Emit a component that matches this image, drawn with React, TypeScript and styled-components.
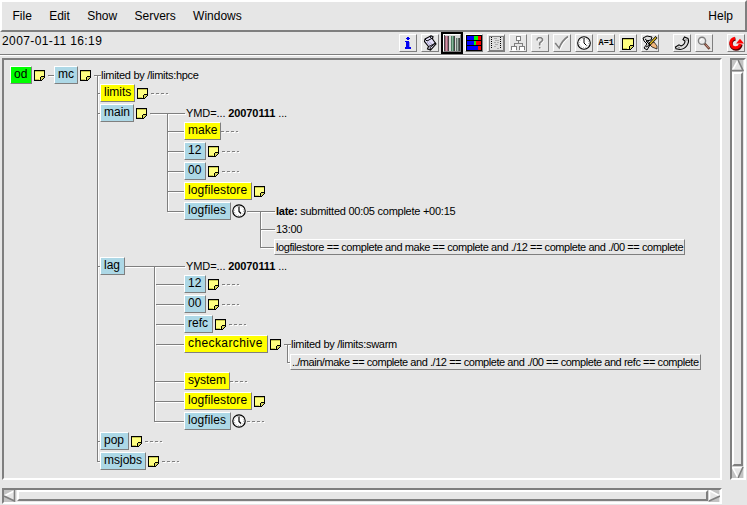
import React from "react";
import styled, { createGlobalStyle } from "styled-components";

const GREY = "#e6e6e6";
const DARK = "#7f7f7f";

const Global = createGlobalStyle`
  * { box-sizing: border-box; }
  body { margin: 0; background: ${GREY}; overflow: hidden; }
`;

const Window = styled.div`
  width: 747px;
  height: 505px;
  display: flex;
  flex-direction: column;
  background: ${GREY};
  color: #000;
  font: 12px "Liberation Sans", Arial, sans-serif;
  white-space: pre;
`;

const MenuBar = styled.nav`
  flex: none;
  height: 32px;
  display: flex;
  align-items: center;
  gap: 17.3px;
  padding: 0 12px 0 10.5px;
  border: 2px solid;
  border-color: #fff ${DARK} ${DARK} #fff;
`;

const MenuItem = styled.span<{ $end?: boolean }>`
  margin-left: ${(p) => (p.$end ? "auto" : "0")};
`;

const StatusBar = styled.div`
  flex: none;
  height: 24px;
  display: flex;
  align-items: flex-start;
  padding-left: 2px;
  border-bottom: 1px solid #fff;
  box-shadow: inset 0 -1px 0 ${DARK};
`;

const DateTime = styled.span`
  flex: 1;
  line-height: 18px;
  letter-spacing: 0.4px;
`;

const Tools = styled.div`
  display: flex;
  gap: 4px;
  padding: 2px 2px 0 0;
`;

const ToolButton = styled.button<{ $active?: boolean; $gap?: number }>`
  width: 18px;
  height: 18px;
  padding: 0;
  margin-left: ${(p) => p.$gap ?? 0}px;
  border: 1px solid;
  border-color: #fff ${DARK} ${DARK} #fff;
  background: ${GREY};
  color: #000;
  outline: ${(p) => (p.$active ? "2px solid #000" : "none")};
  svg { display: block; }
`;

const VariableGlyph = styled.span`
  display: block;
  margin-left: 0.5px;
  font: bold 8.5px/16px "Liberation Mono", monospace;
`;

const Workspace = styled.div`
  display: grid;
  grid-template-columns: 720px 16px;
  grid-template-rows: 422px 16px;
  gap: 8px;
  padding: 2px 0 0 2px;
`;

const Canvas = styled.main`
  position: relative;
  padding: 6px 0 0 6px;
  border: 2px solid;
  border-color: ${DARK} #fff #fff ${DARK};
`;

const Connectors = styled.svg`
  position: absolute;
  left: -4px;
  top: -60px;
`;

const Row = styled.div<{ $h: number; $indent: number }>`
  position: relative;
  display: flex;
  align-items: flex-start;
  height: ${(p) => p.$h}px;
  padding-left: ${(p) => p.$indent}px;
`;

const Box = styled.span<{ $w: number; $fill: string; $track?: number }>`
  width: ${(p) => p.$w}px;
  height: 18px;
  padding-left: 3px;
  border: 1px solid;
  border-color: #fff ${DARK} ${DARK} #fff;
  background: ${(p) => p.$fill};
  line-height: 14px;
  letter-spacing: ${(p) => p.$track ?? 0}px;
`;

const Small = styled.span<{ $gap?: number; $track?: number }>`
  margin-left: ${(p) => p.$gap ?? 0}px;
  font-size: 11px;
  line-height: 18px;
  letter-spacing: ${(p) => p.$track ?? -0.3}px;
`;

const Trigger = styled(Small)`
  width: 411px;
  height: 16px;
  padding-left: 1px;
  border: 1px solid;
  border-color: #fff ${DARK} ${DARK} #fff;
  line-height: 15px;
`;

const Mark = styled.span<{ $x: number; $y: number }>`
  margin: ${(p) => p.$y}px 0 0 ${(p) => p.$x}px;
  svg { display: block; }
`;

const Trough = styled.div<{ $vertical?: boolean }>`
  display: flex;
  flex-direction: ${(p) => (p.$vertical ? "column" : "row")};
  border: 2px solid;
  border-color: ${DARK} #fff #fff ${DARK};
  svg { display: block; flex: none; }
`;

const Thumb = styled.div<{ $vertical?: boolean }>`
  flex: 1;
  margin: ${(p) => (p.$vertical ? "0 1px 0 0" : "0 0 1px 1px")};
  border: 2px solid;
  border-color: #fff ${DARK} ${DARK} #fff;
`;

const arrowShapes = {
  up: ["M6 0L11 11H0Z", "M6 0L0 11", "M0 10.5H11L6 0"],
  down: ["M0 1H11L6 12Z", "M11 1.5H0.5L6 12", "M11 1L6 12"],
  left: ["M0 6L11 0V11Z", "M0 6L11 0.5", "M10.5 0V11L0 6"],
  right: ["M1 0L12 6L1 11Z", "M12 6L1.5 0.5V11", "M1 11L12 6"],
};

const Arrow = ({ dir }: { dir: keyof typeof arrowShapes }) => {
  const [body, light, shade] = arrowShapes[dir];
  return (
    <svg width="12" height="12">
      <rect width="11" height="12" fill="#c3c3c3" />
      <path d={body} fill={GREY} />
      <path d={light} fill="none" stroke="#fff" strokeWidth="1.6" />
      <path d={shade} fill="none" stroke={DARK} strokeWidth="1.6" />
    </svg>
  );
};

const Note = ({ size = 11 }: { size?: number }) => (
  <svg width={size} height={size} viewBox="0 0 11 11" shapeRendering="crispEdges">
    <path d="M0 0H11V8H10V9H9V10H8V11H0Z" fill="#000" />
    <path d="M1 1H10V6H7V7H6V10H1Z" fill="#ffff80" />
    <path d="M1 1H10V2H1ZM1 9H5V10H1Z" fill="#c8c850" />
    <path d="M7 7H10V8H9V9H8V10H7Z" fill="#d8d860" />
  </svg>
);

const ClockFace = () => (
  <svg width="14" height="14">
    <circle cx="7" cy="7" r="6.2" fill="#fff" stroke="#000" strokeWidth="1.2" />
    <circle cx="7" cy="7" r="4.6" fill="none" stroke="#999" strokeDasharray="1 1.4" />
    <path d="M7 2.5V7.5L9 9.5" fill="none" stroke="#000" strokeWidth="1.2" />
  </svg>
);

const Icon = ({ children, crisp }: { children: React.ReactNode; crisp?: boolean }) => (
  <svg width="16" height="16" viewBox="0 0 16 16" fill="none" shapeRendering={crisp ? "crispEdges" : undefined}>
    {children}
  </svg>
);

const tools: { id: string; glyph: React.ReactNode; gap?: number }[] = [
  { id: "info", glyph: (
    <Icon crisp>
      <path d="M7 2H9V3H10V4H9V5H7V4H6V3H7ZM5 6H9V12H11V14H5V12H6V7H5Z" fill="#0000f0" />
      <path d="M9 7H10V12H9Z" fill="#9090e8" />
    </Icon>) },
  { id: "script", glyph: (
    <Icon>
      <path d="M3 4L8 1L13 9L8 12Z" fill="#e4e0fa" />
      <path d="M3 4L9 0.8L11 1.5L10.5 4L14 9L8.5 15L5.5 14L6.5 11.5L2.5 6.5Z" fill="#e4e0fa" stroke="#000" strokeWidth="1.1" />
      <path d="M3 4L5 6L10.5 3M6.5 11.5L13.5 8.2M8.5 15L8 12.5L13.5 8.2M9 .8L8.5 3" stroke="#000" />
      <path d="M5 7L8 10.5M7 6.5L10 9.5" stroke="#a9a3cc" />
    </Icon>) },
  { id: "books", glyph: (
    <Icon crisp>
      <path d="M0 0H16V16H0Z" fill="#d7d7d7" />
      <path d="M0 0H1V16H0ZM4 1H5V16H4ZM10 1H11V16H10ZM15 3H16V16H15Z" fill="#444" />
      <path d="M1 1H4V16H1Z" fill="#a06478" />
      <path d="M2 1H3V16H2Z" fill="#d094a6" />
      <path d="M7 1H10V16H7Z" fill="#4c7c60" />
      <path d="M8 1H9V16H8Z" fill="#88b49a" />
      <path d="M12 3H15V16H12Z" fill="#607068" />
      <path d="M13 3H14V16H13Z" fill="#a7b5ae" />
    </Icon>) },
  { id: "progress", glyph: (
    <Icon crisp>
      <path d="M0 0H16V16H0Z" fill="#000" />
      <path d="M1 1H8V5H1ZM1 6H8V10H1ZM1 11H12V15H1Z" fill="#00f" />
      <path d="M8 1H12V5H8ZM8 6H10V10H8Z" fill="#0f0" />
      <path d="M12 1H15V5H12ZM10 6H15V10H10ZM12 11H15V15H12Z" fill="#f00" />
    </Icon>) },
  { id: "listing", glyph: (
    <Icon crisp>
      <path d="M1 1H15V15H1Z" fill="#ddd" stroke={DARK} />
      <path d="M3.5 2V14M12.5 2V14" stroke="#000" strokeDasharray="1 1" />
      <path d="M6 3.5H9M7 5.5H11M6 7.5H8M9 7.5H11M7 9.5H10M6 11.5H8M9 13.5H11" stroke="#aaa" />
    </Icon>) },
  { id: "hierarchy", glyph: (
    <Icon crisp>
      <path d="M7 2H11V6H7ZM2 12H6V16H2ZM10 12H14V16H10Z" fill="#fff" />
      <path d="M6.5 1.5H10.5V5.5H6.5ZM8.5 6V8.5M4.5 11V8.5H12.5V11M1.5 15V11.5H6.5V15M9.5 15V11.5H14.5V15" stroke={DARK} />
    </Icon>) },
  { id: "why", glyph: (
    <Icon>
      <path d="M6 6V4.5L7.5 3.2H10L11.3 4.5V6L8.5 8.7V11M8.5 12.5V14" stroke="#fff" strokeWidth="1.5" />
      <path d="M5.2 5.5V4L6.5 2.7H9L10.5 4V5.5L7.7 8.2V10.5M7.7 12V13.6" stroke={DARK} strokeWidth="1.6" />
    </Icon>) },
  { id: "check", glyph: (
    <Icon>
      <path d="M2 9L6 13.5Q9 6 15 2" stroke="#fff" strokeWidth="2" />
      <path d="M1.2 8L5.2 13Q8 5.5 14 1.5" stroke={DARK} strokeWidth="1.6" />
    </Icon>) },
  { id: "time", glyph: (
    <Icon>
      <circle cx="8" cy="8" r="6.3" fill="#fff" stroke="#000" strokeWidth="1.1" />
      <circle cx="8" cy="8" r="4.7" stroke="#999" strokeDasharray="1 1.4" />
      <path d="M8 3V8L10.5 10.5" stroke="#000" />
    </Icon>) },
  { id: "variables", glyph: <VariableGlyph>A=1</VariableGlyph> },
  { id: "messages", glyph: <Icon><g transform="translate(2 3)"><Note size={12} /></g></Icon> },
  { id: "edit", glyph: (
    <Icon>
      <path d="M1 3L5 1L10 2L9 5L4 6L8 10L5 15L2 13L5 9L2 6Z" fill="#ddd" stroke="#000" />
      <path d="M3 4L8 8M4 12L8 10" stroke="#000" />
      <path d="M9 8L12 7L15 11V14L10 12L8 10Z" fill="#f2b77d" stroke="#000" strokeWidth="0.7" />
      <path d="M7 10L14.5 2" stroke="#000" strokeWidth="2.6" />
      <path d="M8 9L14 2.5" stroke="#e8c020" strokeWidth="1.2" />
    </Icon>) },
  { id: "phone", gap: 10, glyph: (
    <Icon>
      <path d="M10.5 2L14 3.5C16 8 12 14 6 14.5L2 13.8L1.5 12L5 9.8L7 11C9.5 10 11 8 11 6L9 4.5Z" fill="#ddd" stroke="#000" strokeWidth="1.1" />
      <path d="M11.5 4L13.5 6M4 12L6 13" stroke={DARK} />
    </Icon>) },
  { id: "find", glyph: (
    <Icon>
      <path d="M8.5 8.5L13.5 14" stroke="#69412c" strokeWidth="2.5" />
      <path d="M9.5 9.5L13 13.3" stroke="#d99" strokeWidth="0.9" />
      <circle cx="6" cy="5.8" r="3.6" fill="#eee" stroke={DARK} strokeWidth="1.4" />
      <path d="M4.3 6A2 2 0 0 1 6 4" stroke="#fff" />
    </Icon>) },
  { id: "restart", gap: 10, glyph: (
    <Icon>
      <path d="M7 3.5A5 5 0 1 0 12.5 9" stroke="#500" strokeWidth="3.4" transform="translate(.5 .6)" />
      <path d="M7 3.2A4.8 4.8 0 1 0 12.3 9" stroke="#f00" strokeWidth="3" />
      <path d="M8 8.5L12 3.8L16 8.5Z" fill="#f00" />
    </Icon>) },
];

const CYAN = "#add8e6";
const YELLOW = "#ffff00";

type NodeProps = { name: string; w: number; fill?: string; mark?: "note" | "clock"; track?: number };
const Node = ({ name, w, fill = CYAN, mark, track }: NodeProps) => (
  <>
    <Box $w={w} $fill={fill} $track={track}>{name}</Box>
    {mark === "note" && <Mark $x={2} $y={4}><Note /></Mark>}
    {mark === "clock" && <Mark $x={1} $y={2}><ClockFace /></Mark>}
  </>
);

const lines = [
  "M48 75.5H54", "M94 75.5H101", "M97.5 75V462", "M97 93.5H100", "M97 113.5H100", "M97 266.5H100", "M97 441.5H100", "M97 461.5H100",
  "M150 113.5H185", "M167.5 113V212", "M167 131.5H184", "M167 151.5H184", "M167 171.5H184", "M167 191.5H184", "M167 211.5H184",
  "M247 211.5H275", "M260.5 211V248", "M260 229.5H275", "M260 247.5H274",
  "M125 266.5H185", "M154.5 266V422", "M156 284.5H184", "M156 304.5H184", "M156 324.5H184", "M156 344.5H184", "M155 381.5H184", "M155 401.5H184", "M154 421.5H184",
  "M284 344.5H291", "M287.5 344V363", "M287 362.5H290",
].join("");
const stubs = [[151, 93], [221, 131], [222, 151], [222, 171], [222, 284], [222, 304], [229, 324], [230, 381], [247, 421], [145, 441], [162, 461]]
  .map(([x, y]) => `M${x} ${y}.5h17`).join("");

const Ymd = ({ gap }: { gap: number }) => (
  <Small $gap={gap} $track={-0.1}>YMD=... <b>20070111</b> ...</Small>
);

export default function App() {
  return (
    <Window>
      <Global />
      <MenuBar>
        {["File", "Edit", "Show", "Servers", "Windows"].map((m) => <MenuItem key={m}>{m}</MenuItem>)}
        <MenuItem $end>Help</MenuItem>
      </MenuBar>
      <StatusBar>
        <DateTime>2007-01-11 16:19</DateTime>
        <Tools>
          {tools.map((t) => (
            <ToolButton key={t.id} aria-label={t.id} $active={t.id === "books"} $gap={t.gap}>{t.glyph}</ToolButton>
          ))}
        </Tools>
      </StatusBar>
      <Workspace>
        <Canvas>
          <Connectors width="720" height="480" shapeRendering="crispEdges">
            <path d={lines} stroke="#fff" transform="translate(1 1)" />
            <path d={lines} stroke={DARK} />
            <path d={stubs} stroke="#fff" strokeDasharray="3 2" transform="translate(1 1)" />
            <path d={stubs} stroke={DARK} strokeDasharray="3 2" />
          </Connectors>
          <Row $h={18} $indent={0}>
            <Node name="od" w={22} fill="#00ff00" mark="note" />
            <Mark $x={9} $y={0} />
            <Node name="mc" w={24} mark="note" />
            <Small $gap={10}>limited by /limits:hpce</Small>
          </Row>
          <Row $h={20} $indent={90}><Node name="limits" w={35} fill={YELLOW} mark="note" /></Row>
          <Row $h={18} $indent={90}><Node name="main" w={34} mark="note" /><Ymd gap={39} /></Row>
          <Row $h={20} $indent={174}><Node name="make" w={37} fill={YELLOW} /></Row>
          <Row $h={20} $indent={174}><Node name="12" w={22} mark="note" /></Row>
          <Row $h={20} $indent={174}><Node name="00" w={22} mark="note" /></Row>
          <Row $h={20} $indent={174}><Node name="logfilestore" w={68} fill={YELLOW} mark="note" track={0.1} /></Row>
          <Row $h={18} $indent={174}>
            <Node name="logfiles" w={47} mark="clock" track={0.1} />
            <Small $gap={30} $track={-0.25}><b>late:</b> submitted 00:05 complete +00:15</Small>
          </Row>
          <Row $h={19} $indent={266}><Small>13:00</Small></Row>
          <Row $h={18} $indent={264}><Trigger $track={-0.43}>logfilestore == complete and make == complete and ./12 == complete and ./00 == complete</Trigger></Row>
          <Row $h={18} $indent={90}><Node name="lag" w={25} /><Ymd gap={61} /></Row>
          <Row $h={20} $indent={174}><Node name="12" w={22} mark="note" /></Row>
          <Row $h={20} $indent={174}><Node name="00" w={22} mark="note" /></Row>
          <Row $h={20} $indent={174}><Node name="refc" w={29} mark="note" /></Row>
          <Row $h={19} $indent={174}>
            <Node name="checkarchive" w={84} fill={YELLOW} mark="note" track={0.4} />
            <Small $gap={10}>limited by /limits:swarm</Small>
          </Row>
          <Row $h={18} $indent={280}><Trigger $track={-0.45}>../main/make == complete and ./12 == complete and ./00 == complete and refc == complete</Trigger></Row>
          <Row $h={20} $indent={174}><Node name="system" w={46} fill={YELLOW} /></Row>
          <Row $h={20} $indent={174}><Node name="logfilestore" w={68} fill={YELLOW} mark="note" track={0.1} /></Row>
          <Row $h={20} $indent={174}><Node name="logfiles" w={47} mark="clock" track={0.1} /></Row>
          <Row $h={20} $indent={90}><Node name="pop" w={29} mark="note" /></Row>
          <Row $h={20} $indent={90}><Node name="msjobs" w={46} mark="note" /></Row>
        </Canvas>
        <Trough $vertical>
          <Arrow dir="up" />
          <Thumb $vertical />
          <Arrow dir="down" />
        </Trough>
        <Trough>
          <Arrow dir="left" />
          <Thumb />
          <Arrow dir="right" />
        </Trough>
      </Workspace>
    </Window>
  );
}
